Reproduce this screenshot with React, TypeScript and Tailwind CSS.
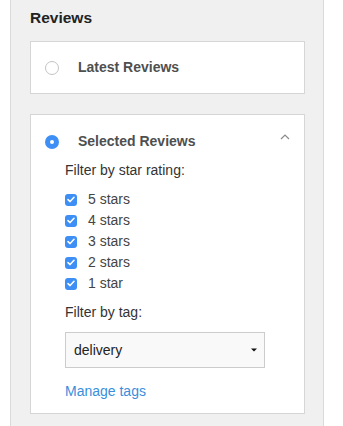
import React from "react";

const font = { fontFamily: '"Liberation Sans", Arial, Helvetica, sans-serif' };

function Checkbox() {
  return (
    <span className="flex h-[12px] w-[12px] items-center justify-center rounded-[3px] bg-[#3d8ff5]">
      <svg width="8" height="7" viewBox="0 0 8 7" fill="none">
        <path d="M1 3.6 L3.1 5.6 L7 1.2" stroke="#ffffff" strokeWidth="1.5" strokeLinecap="round" strokeLinejoin="round" />
      </svg>
    </span>
  );
}

export default function App() {
  const stars = ["5 stars", "4 stars", "3 stars", "2 stars", "1 star"];
  return (
    <div className="h-[426px] w-[343px] bg-white" style={font}>
      <div className="ml-[10px] h-full w-[314px] border-x border-[#dadada] bg-[#f0f0f0] pl-[19px] pr-[18px]">
        <div className="pt-[9px] text-[15.5px] font-bold leading-[18px] text-[#222]">Reviews</div>

        {/* Card 1 */}
        <div className="mt-[14px] flex h-[53px] items-center border border-[#d6d6d6] bg-white pl-[14px]">
          <span className="h-[14px] w-[14px] rounded-full border border-[#c4c4c4] bg-white" />
          <span className="ml-[19px] text-[14px] font-bold leading-[17px] text-[#4f4f4f]">Latest Reviews</span>
        </div>

        {/* Card 2 */}
        <div className="mt-[20px] border border-[#d6d6d6] bg-white pb-[13px] pt-[18px]">
          <div className="relative flex h-[17px] items-center pl-[14px]">
            <span className="flex h-[14px] w-[14px] items-center justify-center rounded-full bg-[#3d8ff5]">
              <span className="h-[4px] w-[4px] rounded-full bg-white" />
            </span>
            <span className="ml-[19px] text-[14px] font-bold leading-[17px] text-[#4f4f4f]">Selected Reviews</span>
            <svg className="absolute right-[14px] top-[1px]" width="10" height="6" viewBox="0 0 10 6" fill="none">
              <path d="M1 5 L5 1 L9 5" stroke="#8a8a8a" strokeWidth="1.2" />
            </svg>
          </div>

          <div className="pl-[34px]">
            <div className="mt-[12px] text-[14px] leading-[17px] text-[#333]">Filter by star rating:</div>
            <div className="mt-[10px] flex flex-col">
              {stars.map((s) => (
                <div key={s} className="flex h-[21px] items-center">
                  <Checkbox />
                  <span className="ml-[11px] text-[14px] leading-[17px] text-[#444]">{s}</span>
                </div>
              ))}
            </div>
            <div className="mt-[10px] text-[14px] leading-[17px] text-[#333]">Filter by tag:</div>
            <div className="mt-[11px] flex h-[36px] w-[200px] items-center justify-between border border-[#cccccc] bg-[#f9f9f9] pl-[8px] pr-[7px]">
              <span className="text-[14px] leading-[17px] text-[#222]">delivery</span>
              <svg width="6" height="4" viewBox="0 0 6 4">
                <path d="M0 0.5 L6 0.5 L3 3.5 Z" fill="#111" />
              </svg>
            </div>
            <div className="mt-[15px] text-[14px] leading-[17px] text-[#3a8edb]">Manage tags</div>
          </div>
        </div>
      </div>
    </div>
  );
}
